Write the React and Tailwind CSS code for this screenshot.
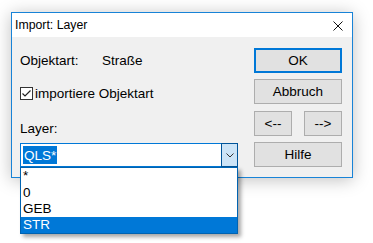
const Btn = ({ children, className = "" }) => (
  <div
    className={`h-[25px] flex items-center justify-center bg-[#e1e1e1] text-[13.5px] text-black ${className}`}
  >
    {children}
  </div>
);

export default function App() {
  return (
    <div className="w-[373px] h-[243px] bg-white overflow-hidden font-['Liberation_Sans',Arial,sans-serif] text-black">
      <div className="relative ml-[11px] mt-[12px] w-[342px] h-[166px] border border-[#1883d7] bg-white shadow-[0_2px_16px_rgba(0,0,0,0.25)] flex flex-col">
        {/* title bar */}
        <div className="h-[24px] shrink-0 bg-white flex items-center justify-between pl-[3px] pr-[9px] text-[12.3px]">
          <span className="mt-[1px]">Import: Layer</span>
          <svg width="10" height="10" viewBox="0 0 10 10" className="mt-[2px]">
            <path d="M0.5 0.5L9.5 9.5M9.5 0.5L0.5 9.5" stroke="#111" strokeWidth="1" />
          </svg>
        </div>

        {/* body */}
        <div className="flex-1 bg-[#f0f0f0] flex pl-[8px] pr-[10px] text-[13.5px] leading-[15px]">
          <div className="flex-1 flex flex-col">
            <div className="mt-[16px] h-[15px] flex">
              <span className="w-[82px]">Objektart:</span>
              <span>Straße</span>
            </div>
            <div className="mt-[18px] h-[15px] flex items-center">
              <div className="w-[13px] h-[13px] border border-[#333] bg-white flex items-center justify-center">
                <svg width="11" height="11" viewBox="0 0 11 11">
                  <path d="M1.5 5.5L4 8L9.5 2.5" fill="none" stroke="#222" strokeWidth="1.2" />
                </svg>
              </div>
              <span className="ml-[2px]">importiere Objektart</span>
            </div>
            <div className="mt-[20px] h-[15px]">Layer:</div>
            <div className="mt-[7px] w-[218px] h-[24px] border border-[#0078d7] bg-white flex">
              <div className="flex-1 flex items-center pl-[2px]">
                <span className="bg-[#0078d7] text-white px-[1px] h-[18px] flex items-center">QLS*</span>
              </div>
              <div className="w-[17px] -my-px -mr-px bg-[#cce4f7] border border-[#005499] flex items-center justify-center">
                <svg width="8" height="5" viewBox="0 0 8 5">
                  <path d="M0.5 0.5L4 4L7.5 0.5" fill="none" stroke="#333" strokeWidth="1" />
                </svg>
              </div>
            </div>
          </div>

          <div className="w-[88px] flex flex-col pt-[11px]">
            <Btn className="border-2 border-[#0078d7]">OK</Btn>
            <Btn className="mt-[6px] border border-[#adadad]">Abbruch</Btn>
            <div className="mt-[7px] flex justify-between">
              <Btn className="w-[38px] border border-[#adadad]">{"<--"}</Btn>
              <Btn className="w-[38px] border border-[#adadad]">{"-->"}</Btn>
            </div>
            <Btn className="mt-[6px] border border-[#adadad]">Hilfe</Btn>
          </div>
        </div>

        {/* open dropdown list */}
        <div className="absolute left-[8px] top-[154px] w-[218px] h-[67px] bg-white border border-[#0063b1] shadow-[3px_3px_4px_rgba(0,0,0,0.35)] flex flex-col text-[13.5px] leading-[16px]">
          <div className="h-[17px] pl-[2px]">*</div>
          <div className="h-[16px] pl-[2px]">0</div>
          <div className="h-[16px] pl-[2px]">GEB</div>
          <div className="h-[16px] pl-[2px] bg-[#0078d7] text-white">STR</div>
        </div>
      </div>
    </div>
  );
}
